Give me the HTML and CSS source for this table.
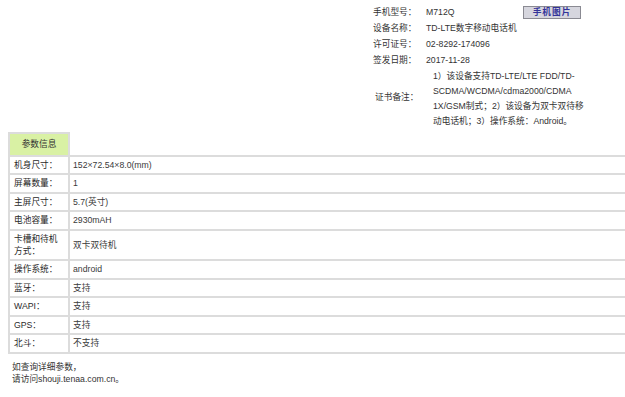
FILE: index.html
```html
<!DOCTYPE html>
<html lang="zh-CN">
<head>
<meta charset="utf-8">
<title>参数信息</title>
<link rel="stylesheet" href="styles.css">
</head>
<body>
<div class="cert">
  <div class="lbl">手机型号：</div>
  <div class="val">M712Q</div>
  <div class="btn-cell"><span class="btn">手机图片</span></div>

  <div class="lbl">设备名称：</div>
  <div class="val span2">TD-LTE数字移动电话机</div>

  <div class="lbl">许可证号：</div>
  <div class="val span2">02-8292-174096</div>

  <div class="lbl">签发日期：</div>
  <div class="val span2">2017-11-28</div>

  <div class="lbl lbl-remark">证书备注：</div>
  <div class="val remark span2">1）该设备支持TD-LTE/LTE FDD/TD-<br>SCDMA/WCDMA/cdma2000/CDMA<br>1X/GSM制式；2）该设备为双卡双待移<br>动电话机；3）操作系统：Android。</div>
</div>

<div class="table-wrap">
<table class="params">
  <tr class="head-row">
    <td class="head">参数信息</td>
    <td class="blank"></td>
  </tr>
  <tr><td class="k">机身尺寸：</td><td class="v">152×72.54×8.0(mm)</td></tr>
  <tr><td class="k">屏幕数量：</td><td class="v">1</td></tr>
  <tr><td class="k">主屏尺寸：</td><td class="v">5.7(英寸)</td></tr>
  <tr><td class="k">电池容量：</td><td class="v">2930mAH</td></tr>
  <tr><td class="k">卡槽和待机方式：</td><td class="v">双卡双待机</td></tr>
  <tr><td class="k">操作系统：</td><td class="v">android</td></tr>
  <tr><td class="k">蓝牙：</td><td class="v">支持</td></tr>
  <tr><td class="k">WAPI：</td><td class="v">支持</td></tr>
  <tr><td class="k">GPS：</td><td class="v">支持</td></tr>
  <tr><td class="k">北斗：</td><td class="v">不支持</td></tr>
</table>
</div>

<p class="note">如查询详细参数，<br>请访问shouji.tenaa.com.cn。</p>
</body>
</html>
```

FILE: styles.css
```css
html, body {
  margin: 0;
  padding: 0;
  overflow: hidden;
  background: #fff;
}
body {
  font-family: "Liberation Sans", "Noto Sans CJK SC", sans-serif;
  font-size: 8.7px;
  color: #333;
  padding: 4px 0 0 8px;
}

.cert {
  display: grid;
  grid-template-columns: 53px 97px 60px;
  margin-left: 365px;
}
.lbl, .val, .btn-cell {
  height: 16px;
  line-height: 16px;
  white-space: nowrap;
}
.span2 { grid-column: span 2; }
.lbl-remark {
  align-self: center;
  padding-left: 2px;
  margin-top: -4px;
}
.remark {
  height: auto;
  line-height: 15px;
  padding: 1px 0 0 7px;
}
.btn-cell { display: flex; align-items: center; }
.btn {
  display: inline-block;
  width: 56px;
  height: 11px;
  line-height: 11px;
  text-align: center;
  background: #d6d6de;
  border: 1px solid #8a8a92;
  color: #333399;
  font-weight: bold;
  letter-spacing: 1px;
}

.table-wrap {
  margin-top: 3px;
  width: 700px;
}
.params {
  border-collapse: collapse;
  width: 700px;
}
.params td {
  border: 2px solid #dcdcdc;
  padding: 2.25px 3px;
  height: 12px;
  line-height: 12px;
  vertical-align: middle;
}
.params td.k {
  width: 52px;
  padding-left: 4px;
  padding-right: 2px;
  color: #2a2a2a;
}
.params td.v { color: #3a3a3a; }
.params td.head {
  background: #d9f1a4;
  text-align: center;
  height: 16px;
}
.params td.blank {
  border-top: none;
  border-right: none;
}

.note {
  margin: 7px 0 0 4px;
  line-height: 12px;
  color: #333;
}
```
